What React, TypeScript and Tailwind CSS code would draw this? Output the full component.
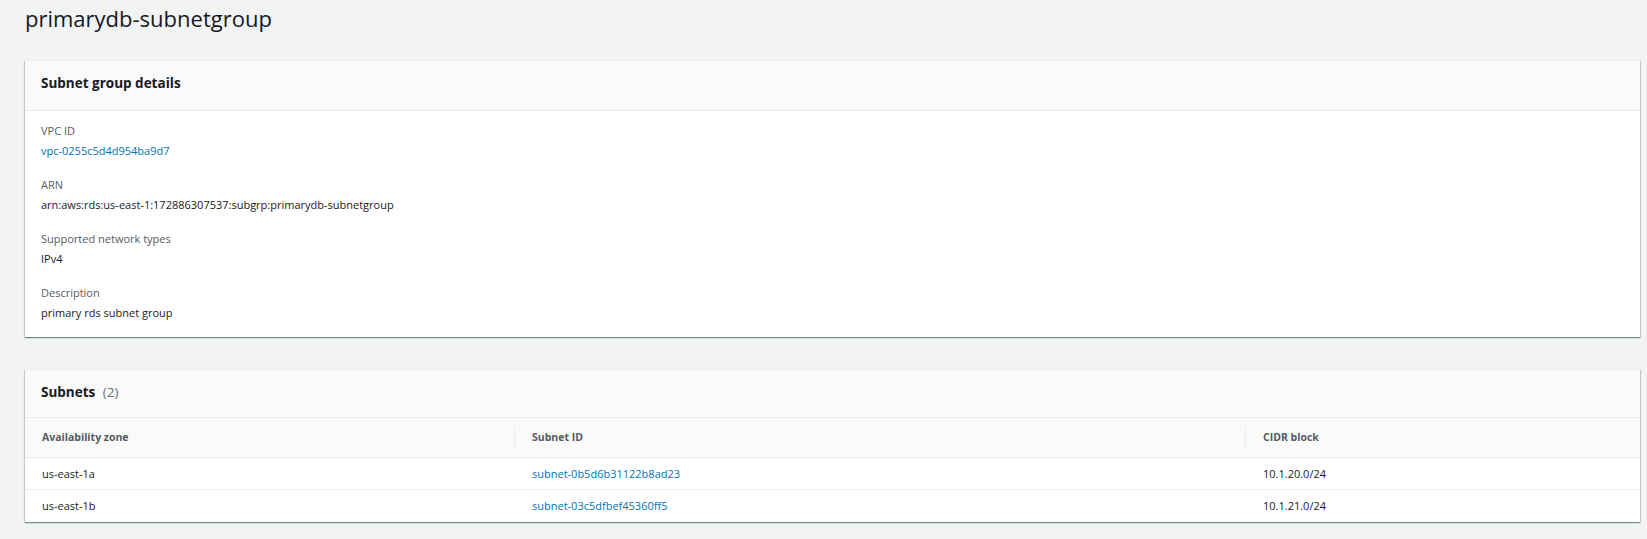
const details = [
  { label: "VPC ID", value: "vpc-0255c5d4d954ba9d7", link: true },
  { label: "ARN", value: "arn:aws:rds:us-east-1:172886307537:subgrp:primarydb-subnetgroup" },
  { label: "Supported network types", value: "IPv4" },
  { label: "Description", value: "primary rds subnet group" },
];

const subnets = [
  { az: "us-east-1a", id: "subnet-0b5d6b31122b8ad23", cidr: "10.1.20.0/24" },
  { az: "us-east-1b", id: "subnet-03c5dfbef45360ff5", cidr: "10.1.21.0/24" },
];

const card =
  "bg-white border-t border-[#eaeded] shadow-[0_1px_1px_0_rgba(0,28,36,0.3),1px_1px_1px_0_rgba(0,28,36,0.15),-1px_1px_1px_0_rgba(0,28,36,0.15)]";

const cols = "grid grid-cols-[489px_731px_1fr]";

export default function App() {
  return (
    <div
      className="min-h-screen bg-[#f2f3f3] pl-[25px] pr-[7px] pt-[3px] pb-[12px] text-[#16191f]"
      style={{ fontFamily: '"Open Sans", "Noto Sans", Arial, sans-serif' }}
    >
      <h1 className="text-[22px] leading-[30px] font-normal text-[#16191f]">primarydb-subnetgroup</h1>

      <section className={`${card} mt-[27px]`}>
        <div className="bg-[#fafafa] border-b border-[#eaeded] px-[16px] pt-[12px] pb-[17px]">
          <h2 className="text-[13.5px] leading-[20px] font-bold">Subnet group details</h2>
        </div>
        <div className="px-[16px] pt-[12px] pb-[16px]">
          {details.map((d, i) => (
            <div key={d.label} className={i > 0 ? "mt-[18px]" : ""}>
              <div className="text-[11px] leading-[16px] text-[#545b64]">{d.label}</div>
              <div
                className={`mt-[4px] text-[11px] leading-[16px] ${d.link ? "text-[#0073bb]" : "text-[#16191f]"}`}
              >
                {d.value}
              </div>
            </div>
          ))}
        </div>
      </section>

      <section className={`${card} mt-[32px]`}>
        <div className="bg-[#fafafa] border-b border-[#eaeded] px-[16px] pt-[12px] pb-[15px]">
          <h2 className="text-[13.5px] leading-[20px] font-bold">
            Subnets <span className="ml-[4px] font-normal text-[#687078]">(2)</span>
          </h2>
        </div>

        <div className={`${cols} bg-[#fafafa] border-b border-[#eaeded] pt-[9px] pb-[10px] text-[10.5px] leading-[20px] font-bold text-[#545b64]`}>
          <div className="pl-[17px]">Availability zone</div>
          <div className="flex items-center">
            <span className="h-[20px] border-l border-[#eaeded]" />
            <span className="pl-[17px]">Subnet ID</span>
          </div>
          <div className="flex items-center">
            <span className="h-[20px] border-l border-[#eaeded]" />
            <span className="pl-[17px]">CIDR block</span>
          </div>
        </div>

        {subnets.map((s, i) => (
          <div
            key={s.id}
            className={`${cols} pt-[6px] text-[11px] leading-[20px] ${i < subnets.length - 1 ? "border-b border-[#eaeded] pb-[5px]" : "pb-[6px]"}`}
          >
            <div className="pl-[17px]">{s.az}</div>
            <div className="pl-[18px] text-[#0073bb]">{s.id}</div>
            <div className="pl-[18px]">{s.cidr}</div>
          </div>
        ))}
      </section>
    </div>
  );
}
